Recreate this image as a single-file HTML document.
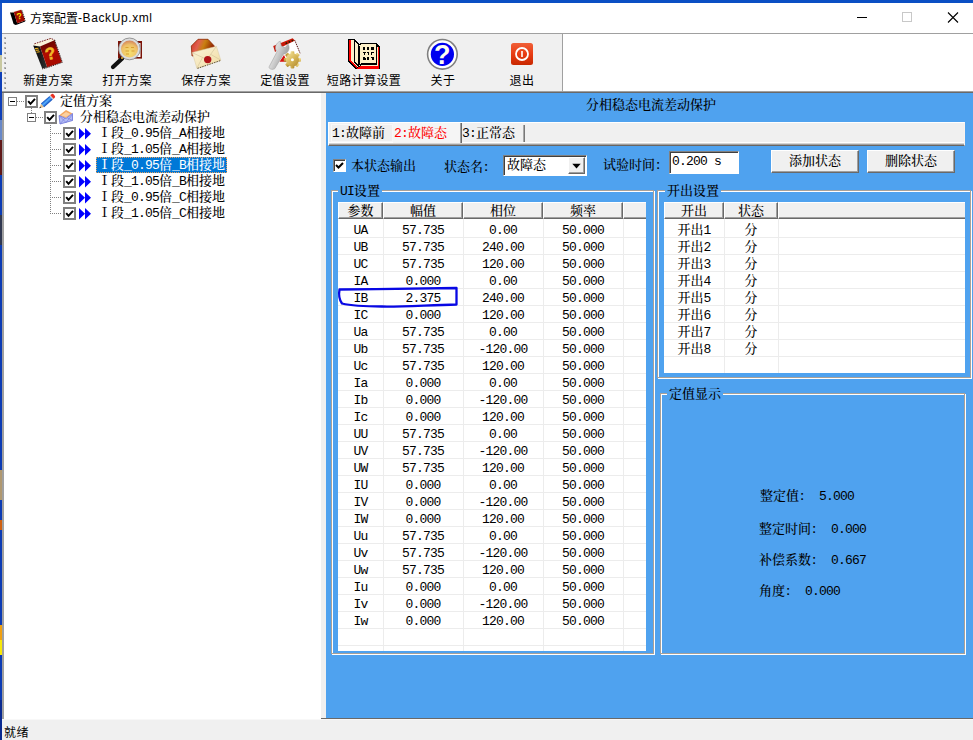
<!DOCTYPE html>
<html lang="zh-CN"><head><meta charset="utf-8"><title>方案配置-BackUp.xml</title>
<style>
html,body{margin:0;padding:0}
body{width:973px;height:740px;overflow:hidden;background:#fff;position:relative;color:#000;font:13px 'Liberation Mono','Noto Serif CJK SC',serif}
div,span,svg{box-sizing:border-box}
.a{position:absolute}
.t{position:absolute;white-space:pre;font:13px 'Liberation Mono','Noto Serif CJK SC',serif;line-height:16px;height:16px;font-weight:500;margin-top:1px}
.l{letter-spacing:-0.8px}
.ui{position:absolute;white-space:pre;font:12px 'Liberation Sans','Noto Sans CJK SC',sans-serif;line-height:16px;height:16px}
.c{text-align:center}
.hd{position:absolute;background:#f0f0f0;border-top:1px solid #fff;border-left:1px solid #fff;border-right:1px solid #696969;border-bottom:1px solid #696969;box-shadow:inset -1px -1px 0 #a0a0a0}
.hd.last{border-right:none;box-shadow:inset 0 -1px 0 #a0a0a0}
.gl{position:absolute;background:#ececec}
.cb{position:absolute;width:13px;height:13px;border:2px solid #808080;background:#fff}
.btn{position:absolute;background:#f0f0f0;border-top:1px solid #fff;border-left:1px solid #fff;border-right:1px solid #696969;border-bottom:1px solid #696969;box-shadow:inset -1px -1px 0 #a0a0a0}
.grp{position:absolute;border:1px solid #fff;box-shadow:inset 1px 1px 0 #a0a0a0, -1px -1px 0 #a0a0a0}
</style></head><body>

<div class="a" style="left:0;top:0;width:973px;height:3px;background:#0b4fc4"></div>
<div class="a" style="left:0;top:0;width:2px;height:740px;background:linear-gradient(#0b4fc4 0 3px,#1a54c8 3px 55px,#c8c8a0 55px 72px,#1040b8 72px 120px,#6888c8 120px 140px,#601818 140px 175px,#0c3cb4 175px 215px,#303850 215px 245px,#0c3cb4 245px 470px,#b09870 470px 500px,#0c3cb4 500px 520px,#d06010 520px 530px,#0c3cb4 530px 625px,#f0a010 625px 640px,#f8e808 640px 655px,#0c3cb4 655px 700px,#0a2a90 700px)"></div>
<div class="a" style="left:2px;top:3px;width:971px;height:30px;background:#fff"></div>
<div class="ui" style="left:30px;top:11px;">方案配置<span style="letter-spacing:0.6px;position:relative;top:-1px">-BackUp.xml</span></div>
<svg class="a" style="left:840px;top:3px" width="133" height="30" viewBox="0 0 133 30"><path d="M17 14.5h10" stroke="#000" stroke-width="1"/><rect x="62.5" y="9.5" width="9" height="9" fill="none" stroke="#c8c8c8"/><path d="M108 9.5l10 10M118 9.5l-10 10" stroke="#000" stroke-width="1.1"/></svg>
<div class="a" style="left:2px;top:33px;width:971px;height:1px;background:#a0a0a0"></div>
<div class="a" style="left:2px;top:34px;width:560px;height:57px;background:#f0f0f0"></div>
<div class="a" style="left:562px;top:34px;width:1px;height:57px;background:#a0a0a0"></div>
<div class="a" style="left:2px;top:91px;width:971px;height:1px;background:#a0a0a0"></div>
<div class="a" style="left:2px;top:92px;width:971px;height:1px;background:#696969"></div>
<svg class="a" style="left:4px;top:37px" width="3" height="54"><rect x="0" y="0" width="2" height="2" fill="#b4b4b4"/><rect x="1" y="1" width="1" height="1" fill="#8c8c8c"/><rect x="0" y="5" width="2" height="2" fill="#b4b4b4"/><rect x="1" y="6" width="1" height="1" fill="#8c8c8c"/><rect x="0" y="10" width="2" height="2" fill="#b4b4b4"/><rect x="1" y="11" width="1" height="1" fill="#8c8c8c"/><rect x="0" y="15" width="2" height="2" fill="#b4b4b4"/><rect x="1" y="16" width="1" height="1" fill="#8c8c8c"/><rect x="0" y="20" width="2" height="2" fill="#b4b4b4"/><rect x="1" y="21" width="1" height="1" fill="#8c8c8c"/><rect x="0" y="25" width="2" height="2" fill="#b4b4b4"/><rect x="1" y="26" width="1" height="1" fill="#8c8c8c"/><rect x="0" y="30" width="2" height="2" fill="#b4b4b4"/><rect x="1" y="31" width="1" height="1" fill="#8c8c8c"/><rect x="0" y="35" width="2" height="2" fill="#b4b4b4"/><rect x="1" y="36" width="1" height="1" fill="#8c8c8c"/><rect x="0" y="40" width="2" height="2" fill="#b4b4b4"/><rect x="1" y="41" width="1" height="1" fill="#8c8c8c"/><rect x="0" y="45" width="2" height="2" fill="#b4b4b4"/><rect x="1" y="46" width="1" height="1" fill="#8c8c8c"/><rect x="0" y="50" width="2" height="2" fill="#b4b4b4"/><rect x="1" y="51" width="1" height="1" fill="#8c8c8c"/></svg>
<div class="ui c" style="left:-2px;top:73px;width:100px;letter-spacing:0.4px">新建方案</div>
<div class="ui c" style="left:77px;top:73px;width:100px;letter-spacing:0.4px">打开方案</div>
<div class="ui c" style="left:156px;top:73px;width:100px;letter-spacing:0.4px">保存方案</div>
<div class="ui c" style="left:235px;top:73px;width:100px;letter-spacing:0.4px">定值设置</div>
<div class="ui c" style="left:314px;top:73px;width:100px;letter-spacing:0.4px">短路计算设置</div>
<div class="ui c" style="left:393px;top:73px;width:100px;letter-spacing:0.4px">关于</div>
<div class="ui c" style="left:472px;top:73px;width:100px;letter-spacing:0.4px">退出</div>
<svg class="a" style="left:6px;top:5px" width="30" height="24" viewBox="6 5 30 24"><path d="M10 12.6L13.8 12.1L17.2 23.2L25 20.6L25.2 21.6L17.4 24.6L15.6 25L13.6 24Z" fill="#000"/><path d="M10.2 12.2L20.8 9.3L21.4 10L13.8 12.4Z" fill="#f8f0e0"/><path d="M13.8 12.1L21.3 9.8L25 20.6L17.2 23.3Z" fill="#a00a00"/><path d="M22 10.5L25.2 20.5" stroke="#000" stroke-width="1" stroke-dasharray="1 1"/><text x="19.3" y="19.3" font-family="Liberation Sans, sans-serif" font-weight="bold" font-size="9" fill="#f8e800" text-anchor="middle" transform="rotate(-12 19.3 16)">?</text></svg>
<svg class="a" style="left:24px;top:34px" width="50" height="38" viewBox="24 34 50 38"><defs><linearGradient id="bk1" x1="0" y1="0" x2="0.3" y2="1"><stop offset="0" stop-color="#5a0400"/><stop offset="0.45" stop-color="#8a0800"/><stop offset="0.5" stop-color="#b00c00"/><stop offset="1" stop-color="#a80a00"/></linearGradient><linearGradient id="bk2" x1="0" y1="0" x2="1" y2="0"><stop offset="0" stop-color="#050505"/><stop offset="1" stop-color="#303030"/></linearGradient></defs><path d="M33.2 45.6L34.4 44.2L50.8 38.8L54.4 40.2L40.2 46.6Z" fill="#fbf3d8"/><path d="M33.2 45.6L40 46.4L47.2 67.3L42.2 68.6Z" fill="url(#bk2)"/><path d="M40 46.4L54.4 40.2L62 62.2L47.2 67.3Z" fill="url(#bk1)"/><path d="M34.4 43.8L50.8 38.4L54.6 40" stroke="#6a0808" stroke-width="0.9" fill="none" stroke-dasharray="1.6 1"/><path d="M54.6 40L62.3 62.3L47.3 67.6L42.2 68.9" stroke="#1a0000" stroke-width="0.9" fill="none" stroke-dasharray="1.4 0.9"/><path d="M35 48.6l3.4-.4M35.6 50.4l3.4-.4M36.4 52.2l3.4-.4" stroke="#e8b020" stroke-width="1.1"/><text x="50.6" y="59.4" font-family="Liberation Sans, sans-serif" font-weight="bold" font-size="17" fill="#f0b828" stroke="#f0b828" stroke-width="0.5" text-anchor="middle" transform="rotate(-14 50.6 54)">?</text></svg>
<svg class="a" style="left:103px;top:34px" width="50" height="38" viewBox="103 34 50 38"><defs><radialGradient id="ln" cx="0.5" cy="0.7" r="0.7"><stop offset="0" stop-color="#f6e070"/><stop offset="0.6" stop-color="#eec068"/><stop offset="1" stop-color="#c87058"/></radialGradient></defs><rect x="118" y="41" width="24" height="17.6" fill="#7a1408"/><rect x="134" y="43" width="6.5" height="14" fill="#fff"/><path d="M122.4 58.2L113 67" stroke="#101010" stroke-width="4.2" stroke-linecap="round"/><circle cx="129.5" cy="48.9" r="9.7" fill="url(#ln)" stroke="#dcdcdc" stroke-width="2.4"/><circle cx="129.5" cy="48.9" r="10.9" fill="none" stroke="#808080" stroke-width="0.8"/><path d="M125.5 47.5h3M131 47.5h3M125.5 51h3.5M131.5 51h3M126 54h3" stroke="#d8a030" stroke-width="1.2"/><circle cx="122" cy="58" r="1" fill="#f0b030"/></svg>
<svg class="a" style="left:182px;top:34px" width="50" height="38" viewBox="182 34 50 38"><defs><linearGradient id="ev1" x1="0" y1="0" x2="1" y2="0.3"><stop offset="0" stop-color="#d03020"/><stop offset="0.35" stop-color="#e06050"/><stop offset="0.6" stop-color="#c88010"/><stop offset="1" stop-color="#902000"/></linearGradient><linearGradient id="ev2" x1="0" y1="0" x2="1" y2="1"><stop offset="0" stop-color="#fbf4dc"/><stop offset="1" stop-color="#f0dca0"/></linearGradient></defs><path d="M191.3 46L198 39.3H208L214.3 46V52L192 56Z" fill="url(#ev1)" stroke="#8a2800" stroke-width="0.8"/><path d="M192.3 52.5L216.4 46.3L220.8 60.2L196.9 68.4Z" fill="url(#ev2)" stroke="#d8c8a0" stroke-width="0.5"/><path d="M192.5 52.8L207 59.5L216.2 46.6M197 68L202.5 57.5M220.5 60L211 54.5" stroke="#c8b890" stroke-width="0.5" fill="none"/><path d="M197.5 68.4L221 60.4" stroke="#504020" stroke-width="0.9" stroke-dasharray="1.5 1"/><circle cx="207.7" cy="59.6" r="3.7" fill="#b01418"/></svg>
<svg class="a" style="left:261px;top:34px" width="50" height="38" viewBox="261 34 50 38"><defs><linearGradient id="wr" x1="0" y1="0" x2="1" y2="0.6"><stop offset="0" stop-color="#ffffff"/><stop offset="0.5" stop-color="#d0d0d0"/><stop offset="1" stop-color="#909090"/></linearGradient><linearGradient id="gr" x1="0" y1="0" x2="1" y2="1"><stop offset="0" stop-color="#f4e4a0"/><stop offset="0.5" stop-color="#d8b858"/><stop offset="1" stop-color="#b08830"/></linearGradient></defs><path d="M273.2 46L292.6 38.2L295 40.4L300.2 53.6L286 61.5L280 61.5Z" fill="#fff"/><path d="M273.2 46L292.6 38.2L295 40.6L281 47.5L275 52Z" fill="#c81808"/><path d="M279.5 61.8L284 55L287 61.8Z" fill="#d81010"/><path d="M294.8 40.4L300.2 53.6" stroke="#500808" stroke-width="1" stroke-dasharray="1.2 0.8"/><circle cx="286.4" cy="43.2" r="0.9" fill="#282000"/><circle cx="289.4" cy="41.9" r="0.9" fill="#282000"/><circle cx="292.4" cy="40.6" r="0.9" fill="#282000"/><path d="M269.2 66.6L277 51.8C274 48.4 275.6 43 280.2 41.2L281.4 46L285.2 47.6L288 44C290.6 48 288.4 53.6 283.4 54.2L274.8 68.6C272.6 70.4 268.2 68.8 269.2 66.6Z" fill="url(#wr)" stroke="#989898" stroke-width="0.5"/><g transform="translate(292.4 59.8)"><g fill="url(#gr)"><rect x="-1.9" y="-8.6" width="3.8" height="17.2" rx="0.8" transform="rotate(0)"/><rect x="-1.9" y="-8.6" width="3.8" height="17.2" rx="0.8" transform="rotate(45)"/><rect x="-1.9" y="-8.6" width="3.8" height="17.2" rx="0.8" transform="rotate(90)"/><rect x="-1.9" y="-8.6" width="3.8" height="17.2" rx="0.8" transform="rotate(135)"/><circle r="6.6"/></g><circle r="1.5" fill="#fff"/></g></svg>
<svg class="a" style="left:340px;top:34px" width="50" height="38" viewBox="340 34 50 38" shape-rendering="crispEdges"><path d="M348 39H355L359 44V67L356 69.5L348 61Z" fill="#000"/><path d="M359 44L361 43H376L380 46V69H356L359 67Z" fill="#000"/><path d="M349 40H350.5V60.5L356.5 66.5V68.5L349 61Z" fill="#f00"/><path d="M357 68L361 66H378V47H379V68.5H357Z" fill="#f00"/><path d="M351 40H354V62.5L358 66V67L351 61Z" fill="#fdf0c8"/><path d="M355 41L358 45V65L355 62Z" fill="#fdf0c8"/><path d="M359.5 45.5L361.5 44H375.5V63H361.5L359.5 65.5Z" fill="#fdf0c8"/><path d="M359.5 67L362 64.5H376.5V46.5H377.5V66H360Z" fill="#fdf0c8"/><path d="M363 47.5h2M366.5 47.5h2.5M371 47.5h2.5M363 49h2M367 49h2M371 49h2.5M363 52.5h2.5M367 52.5h2M371 52.5h3M363.5 54h1.5M367.5 54h1.5M371 54h1M363 57.5h2M367 57.5h2M371 57.5h3M363 59h2.5M367 59h2M372 59h2" stroke="#000" stroke-width="1.4"/></svg>
<svg class="a" style="left:418px;top:34px" width="50" height="38" viewBox="418 34 50 38"><circle cx="442.4" cy="54.3" r="14.8" fill="#fff" stroke="#808080" stroke-width="1.6"/><circle cx="442.4" cy="54.3" r="11.6" fill="#0000f0"/><text x="442.3" y="64.2" font-family="Liberation Sans, sans-serif" font-weight="bold" font-size="27" fill="#fffff0" text-anchor="middle">?</text></svg>
<svg class="a" style="left:497px;top:34px" width="50" height="38" viewBox="497 34 50 38"><defs><linearGradient id="ex" x1="0" y1="0" x2="0" y2="1"><stop offset="0" stop-color="#f06038"/><stop offset="0.5" stop-color="#e83c14"/><stop offset="1" stop-color="#c82800"/></linearGradient></defs><rect x="511" y="43" width="22" height="22" rx="2.5" fill="url(#ex)"/><circle cx="522" cy="54" r="6" fill="none" stroke="#fff" stroke-width="1.8"/><path d="M522 51v6" stroke="#fff" stroke-width="1.6"/></svg>
<div class="a" style="left:2px;top:93px;width:2px;height:626px;background:#a0a0a0"></div>
<div class="a" style="left:321px;top:93px;width:5px;height:625px;background:#f0f0f0"></div>
<svg class="a" style="left:8px;top:97px" width="9" height="9"><rect x="0.5" y="0.5" width="8" height="8" fill="#fff" stroke="#808080"/><path d="M2 4.5h5" stroke="#000"/></svg>
<div class="a" style="left:17px;top:101px;width:7px;height:1px;background:repeating-linear-gradient(90deg,#808080 0 1px,transparent 1px 2px)"></div>
<div class="cb" style="left:25px;top:95px"></div>
<svg class="a" style="left:25px;top:95px" width="13" height="13"><path d="M3.2 6.2l2.3 2.6L10 3.8" stroke="#000" stroke-width="2" fill="none"/></svg>
<svg class="a" style="left:38px;top:92px" width="18" height="18" viewBox="-1 -1 18 18"><defs><linearGradient id="pc" x1="0" y1="0" x2="0" y2="1"><stop offset="0" stop-color="#0c4cc0"/><stop offset="0.45" stop-color="#58b0ff"/><stop offset="1" stop-color="#0c48b8"/></linearGradient></defs><g transform="translate(0.4 15.2) rotate(-41.7)"><path d="M0 0L4.4 -2.3V2.3Z" fill="#e8c088"/><path d="M0 0L1.7 -0.9V0.9Z" fill="#203040"/><rect x="4.2" y="-2.4" width="11.6" height="4.8" fill="url(#pc)"/><rect x="15.6" y="-2.4" width="1.2" height="4.8" fill="#c8ccd8"/><path d="M16.8 -2.4H18.4Q19.8 -2.4 19.8 0Q19.8 2.4 18.4 2.4H16.8Z" fill="#e83020"/></g></svg>
<div class="t" style="left:60px;top:93px">定值方案</div>
<div class="a" style="left:31px;top:108px;width:1px;height:5px;background:repeating-linear-gradient(180deg,#808080 0 1px,transparent 1px 2px)"></div>
<svg class="a" style="left:27px;top:113px" width="9" height="9"><rect x="0.5" y="0.5" width="8" height="8" fill="#fff" stroke="#808080"/><path d="M2 4.5h5" stroke="#000"/></svg>
<div class="a" style="left:36px;top:117px;width:7px;height:1px;background:repeating-linear-gradient(90deg,#808080 0 1px,transparent 1px 2px)"></div>
<div class="cb" style="left:44px;top:111px"></div>
<svg class="a" style="left:44px;top:111px" width="13" height="13"><path d="M3.2 6.2l2.3 2.6L10 3.8" stroke="#000" stroke-width="2" fill="none"/></svg>
<svg class="a" style="left:58px;top:109px" width="16" height="16" viewBox="0 0 16 16"><path d="M1 6.5L8 1l6.5 3.5L8 9z" fill="#f4a860"/><path d="M3 6.5L8 3l4.5 2L8 8z" fill="#fbd0a0"/><path d="M1 6.5l7 3 6.5-5v7L2 15z" fill="#b4bcf4" stroke="#6870d8" stroke-width=".8"/><path d="M1.5 7l6.5 6.5 6.5-8M2 15l5-6M14.5 11.5L9.5 9" stroke="#7880e0" stroke-width=".7" fill="none"/></svg>
<div class="t" style="left:80px;top:109px">分相稳态电流差动保护</div>
<div class="a" style="left:50px;top:125px;width:1px;height:89px;background:repeating-linear-gradient(180deg,#808080 0 1px,transparent 1px 2px)"></div>
<div class="a" style="left:52px;top:133px;width:10px;height:1px;background:repeating-linear-gradient(90deg,#808080 0 1px,transparent 1px 2px)"></div>
<div class="cb" style="left:63px;top:127px"></div>
<svg class="a" style="left:63px;top:127px" width="13" height="13"><path d="M3.2 6.2l2.3 2.6L10 3.8" stroke="#000" stroke-width="2" fill="none"/></svg>
<svg class="a" style="left:79px;top:128px" width="13" height="12"><path d="M0 0l6 5.75L0 11.5zM6 0l6 5.75L6 11.5z" fill="#00f"/></svg>
<div class="t" style="left:98px;top:125px">Ⅰ段<span class="l">_0.95</span>倍<span class="l">_A</span>相接地</div>
<div class="a" style="left:52px;top:149px;width:10px;height:1px;background:repeating-linear-gradient(90deg,#808080 0 1px,transparent 1px 2px)"></div>
<div class="cb" style="left:63px;top:143px"></div>
<svg class="a" style="left:63px;top:143px" width="13" height="13"><path d="M3.2 6.2l2.3 2.6L10 3.8" stroke="#000" stroke-width="2" fill="none"/></svg>
<svg class="a" style="left:79px;top:144px" width="13" height="12"><path d="M0 0l6 5.75L0 11.5zM6 0l6 5.75L6 11.5z" fill="#00f"/></svg>
<div class="t" style="left:98px;top:141px">Ⅰ段<span class="l">_1.05</span>倍<span class="l">_A</span>相接地</div>
<div class="a" style="left:52px;top:165px;width:10px;height:1px;background:repeating-linear-gradient(90deg,#808080 0 1px,transparent 1px 2px)"></div>
<div class="cb" style="left:63px;top:159px"></div>
<svg class="a" style="left:63px;top:159px" width="13" height="13"><path d="M3.2 6.2l2.3 2.6L10 3.8" stroke="#000" stroke-width="2" fill="none"/></svg>
<svg class="a" style="left:79px;top:160px" width="13" height="12"><path d="M0 0l6 5.75L0 11.5zM6 0l6 5.75L6 11.5z" fill="#00f"/></svg>
<div class="a" style="left:96px;top:157px;width:131px;height:16px;background:#0078d7;outline:1px dotted #e8a060;outline-offset:-1px"></div>
<div class="t" style="left:98px;top:157px;color:#fff">Ⅰ段<span class="l">_0.95</span>倍<span class="l">_B</span>相接地</div>
<div class="a" style="left:52px;top:181px;width:10px;height:1px;background:repeating-linear-gradient(90deg,#808080 0 1px,transparent 1px 2px)"></div>
<div class="cb" style="left:63px;top:175px"></div>
<svg class="a" style="left:63px;top:175px" width="13" height="13"><path d="M3.2 6.2l2.3 2.6L10 3.8" stroke="#000" stroke-width="2" fill="none"/></svg>
<svg class="a" style="left:79px;top:176px" width="13" height="12"><path d="M0 0l6 5.75L0 11.5zM6 0l6 5.75L6 11.5z" fill="#00f"/></svg>
<div class="t" style="left:98px;top:173px">Ⅰ段<span class="l">_1.05</span>倍<span class="l">_B</span>相接地</div>
<div class="a" style="left:52px;top:197px;width:10px;height:1px;background:repeating-linear-gradient(90deg,#808080 0 1px,transparent 1px 2px)"></div>
<div class="cb" style="left:63px;top:191px"></div>
<svg class="a" style="left:63px;top:191px" width="13" height="13"><path d="M3.2 6.2l2.3 2.6L10 3.8" stroke="#000" stroke-width="2" fill="none"/></svg>
<svg class="a" style="left:79px;top:192px" width="13" height="12"><path d="M0 0l6 5.75L0 11.5zM6 0l6 5.75L6 11.5z" fill="#00f"/></svg>
<div class="t" style="left:98px;top:189px">Ⅰ段<span class="l">_0.95</span>倍<span class="l">_C</span>相接地</div>
<div class="a" style="left:52px;top:213px;width:10px;height:1px;background:repeating-linear-gradient(90deg,#808080 0 1px,transparent 1px 2px)"></div>
<div class="cb" style="left:63px;top:207px"></div>
<svg class="a" style="left:63px;top:207px" width="13" height="13"><path d="M3.2 6.2l2.3 2.6L10 3.8" stroke="#000" stroke-width="2" fill="none"/></svg>
<svg class="a" style="left:79px;top:208px" width="13" height="12"><path d="M0 0l6 5.75L0 11.5zM6 0l6 5.75L6 11.5z" fill="#00f"/></svg>
<div class="t" style="left:98px;top:205px">Ⅰ段<span class="l">_1.05</span>倍<span class="l">_C</span>相接地</div>
<div class="a" style="left:326px;top:93px;width:647px;height:625px;background:#4fa2ef"></div>
<div class="t c" style="left:551px;top:97px;width:200px">分相稳态电流差动保护</div>
<div class="a" style="left:328px;top:122px;width:637px;height:24px;background:#f0f0f0;border-top:1px solid #fff;border-left:1px solid #fff;border-right:1px solid #f8f2ee;border-bottom:1px solid #6a6560;box-shadow:inset 0 -1px 0 #a0a0a0,inset 0 -2px 0 #d4d4d4,inset 0 -3px 0 #fff"></div>
<div class="a" style="left:331px;top:124px;width:62px;height:18px;background:#efefef;border:1px solid #f8f8f8"></div>
<div class="a" style="left:393px;top:123px;width:69px;height:20px;background:#f5f5f5;border-right:1px solid #696969;box-shadow:inset -1px 0 0 #a0a0a0"></div>
<div class="a" style="left:523px;top:125px;width:2px;height:17px;background:linear-gradient(90deg,#a8a8a8 50%,#787878 50%)"></div>
<div class="t" style="left:332px;top:125px"><span class="l">1:</span>故障前</div>
<div class="t" style="left:394px;top:125px;color:#f00"><span class="l">2:</span>故障态</div>
<div class="t" style="left:462px;top:125px"><span class="l">3:</span>正常态</div>
<div class="a" style="left:333px;top:159px;width:13px;height:13px;background:#fff;border-top:1px solid #808080;border-left:1px solid #808080;border-right:1px solid #fff;border-bottom:1px solid #fff;box-shadow:inset 1px 1px 0 #404040"></div>
<svg class="a" style="left:333px;top:159px" width="13" height="13"><path d="M3 6l2.5 2.5L10 4" stroke="#000" stroke-width="2" fill="none"/></svg>
<div class="t" style="left:351px;top:158px">本状态输出</div>
<div class="t" style="left:444px;top:159px">状态名：</div>
<div class="a" style="left:503px;top:155px;width:84px;height:21px;background:#fff;border-top:1px solid #808080;border-left:1px solid #808080;border-right:1px solid #fff;border-bottom:1px solid #fff;box-shadow:inset 1px 1px 0 #404040"></div>
<div class="btn" style="left:568px;top:157px;width:17px;height:17px"></div>
<svg class="a" style="left:568px;top:157px" width="17" height="17"><path d="M4.3 6.8h8.4l-4.2 4.6z" fill="#000"/></svg>
<div class="t" style="left:507px;top:157px">故障态</div>
<div class="t" style="left:603px;top:157px">试验时间：</div>
<div class="a" style="left:669px;top:151px;width:70px;height:23px;background:#fff;border-top:1px solid #808080;border-left:1px solid #808080;border-right:1px solid #fff;border-bottom:1px solid #fff;box-shadow:inset 1px 1px 0 #404040"></div>
<div class="t" style="left:672px;top:153px"><span class="l">0.200 s</span></div>
<div class="btn" style="left:771px;top:150px;width:88px;height:23px"></div>
<div class="t c" style="left:771px;top:153px;width:88px">添加状态</div>
<div class="btn" style="left:867px;top:150px;width:88px;height:23px"></div>
<div class="t c" style="left:867px;top:153px;width:88px">删除状态</div>
<div class="a" style="left:332px;top:191px;width:323px;height:464px;border:1px solid #fff"></div>
<div class="a" style="left:331px;top:190px;width:323px;height:464px;border:1px solid #a8a098"></div>
<div class="a" style="left:338px;top:190px;width:44px;height:2px;background:#4fa2ef"></div>
<div class="t" style="left:340px;top:183px"><span class="l">UI</span>设置</div>
<div class="a" style="left:658px;top:191px;width:314px;height:188px;border:1px solid #fff"></div>
<div class="a" style="left:657px;top:190px;width:314px;height:188px;border:1px solid #a8a098"></div>
<div class="a" style="left:665px;top:190px;width:56px;height:2px;background:#4fa2ef"></div>
<div class="t" style="left:667px;top:183px">开出设置</div>
<div class="a" style="left:661px;top:394px;width:305px;height:261px;border:1px solid #fff"></div>
<div class="a" style="left:660px;top:393px;width:305px;height:261px;border:1px solid #a8a098"></div>
<div class="a" style="left:667px;top:393px;width:56px;height:2px;background:#4fa2ef"></div>
<div class="t" style="left:669px;top:386px">定值显示</div>
<div class="a" style="left:338px;top:202px;width:308px;height:449px;background:#fff"></div>
<div class="hd" style="left:338px;top:202px;width:45px;height:17px"></div>
<div class="t c" style="left:338px;top:203px;width:45px">参数</div>
<div class="hd" style="left:383px;top:202px;width:80px;height:17px"></div>
<div class="t c" style="left:383px;top:203px;width:80px">幅值</div>
<div class="hd" style="left:463px;top:202px;width:80px;height:17px"></div>
<div class="t c" style="left:463px;top:203px;width:80px">相位</div>
<div class="hd" style="left:543px;top:202px;width:80px;height:17px"></div>
<div class="t c" style="left:543px;top:203px;width:80px">频率</div>
<div class="hd last" style="left:623px;top:202px;width:23px;height:17px"></div>
<div class="gl" style="left:338px;top:237px;width:308px;height:1px"></div>
<div class="gl" style="left:338px;top:254px;width:308px;height:1px"></div>
<div class="gl" style="left:338px;top:271px;width:308px;height:1px"></div>
<div class="gl" style="left:338px;top:288px;width:308px;height:1px"></div>
<div class="gl" style="left:338px;top:305px;width:308px;height:1px"></div>
<div class="gl" style="left:338px;top:322px;width:308px;height:1px"></div>
<div class="gl" style="left:338px;top:339px;width:308px;height:1px"></div>
<div class="gl" style="left:338px;top:356px;width:308px;height:1px"></div>
<div class="gl" style="left:338px;top:373px;width:308px;height:1px"></div>
<div class="gl" style="left:338px;top:390px;width:308px;height:1px"></div>
<div class="gl" style="left:338px;top:407px;width:308px;height:1px"></div>
<div class="gl" style="left:338px;top:424px;width:308px;height:1px"></div>
<div class="gl" style="left:338px;top:441px;width:308px;height:1px"></div>
<div class="gl" style="left:338px;top:458px;width:308px;height:1px"></div>
<div class="gl" style="left:338px;top:475px;width:308px;height:1px"></div>
<div class="gl" style="left:338px;top:492px;width:308px;height:1px"></div>
<div class="gl" style="left:338px;top:509px;width:308px;height:1px"></div>
<div class="gl" style="left:338px;top:526px;width:308px;height:1px"></div>
<div class="gl" style="left:338px;top:543px;width:308px;height:1px"></div>
<div class="gl" style="left:338px;top:560px;width:308px;height:1px"></div>
<div class="gl" style="left:338px;top:577px;width:308px;height:1px"></div>
<div class="gl" style="left:338px;top:594px;width:308px;height:1px"></div>
<div class="gl" style="left:338px;top:611px;width:308px;height:1px"></div>
<div class="gl" style="left:338px;top:628px;width:308px;height:1px"></div>
<div class="gl" style="left:338px;top:645px;width:308px;height:1px"></div>
<div class="gl" style="left:383px;top:219px;width:1px;height:432px"></div>
<div class="gl" style="left:463px;top:219px;width:1px;height:432px"></div>
<div class="gl" style="left:543px;top:219px;width:1px;height:432px"></div>
<div class="gl" style="left:623px;top:219px;width:1px;height:432px"></div>
<div class="t c l" style="left:338px;top:222px;width:45px">UA</div>
<div class="t c l" style="left:383px;top:222px;width:80px">57.735</div>
<div class="t c l" style="left:463px;top:222px;width:80px">0.00</div>
<div class="t c l" style="left:543px;top:222px;width:80px">50.000</div>
<div class="t c l" style="left:338px;top:239px;width:45px">UB</div>
<div class="t c l" style="left:383px;top:239px;width:80px">57.735</div>
<div class="t c l" style="left:463px;top:239px;width:80px">240.00</div>
<div class="t c l" style="left:543px;top:239px;width:80px">50.000</div>
<div class="t c l" style="left:338px;top:256px;width:45px">UC</div>
<div class="t c l" style="left:383px;top:256px;width:80px">57.735</div>
<div class="t c l" style="left:463px;top:256px;width:80px">120.00</div>
<div class="t c l" style="left:543px;top:256px;width:80px">50.000</div>
<div class="t c l" style="left:338px;top:273px;width:45px">IA</div>
<div class="t c l" style="left:383px;top:273px;width:80px">0.000</div>
<div class="t c l" style="left:463px;top:273px;width:80px">0.00</div>
<div class="t c l" style="left:543px;top:273px;width:80px">50.000</div>
<div class="t c l" style="left:338px;top:290px;width:45px">IB</div>
<div class="t c l" style="left:383px;top:290px;width:80px">2.375</div>
<div class="t c l" style="left:463px;top:290px;width:80px">240.00</div>
<div class="t c l" style="left:543px;top:290px;width:80px">50.000</div>
<div class="t c l" style="left:338px;top:307px;width:45px">IC</div>
<div class="t c l" style="left:383px;top:307px;width:80px">0.000</div>
<div class="t c l" style="left:463px;top:307px;width:80px">120.00</div>
<div class="t c l" style="left:543px;top:307px;width:80px">50.000</div>
<div class="t c l" style="left:338px;top:324px;width:45px">Ua</div>
<div class="t c l" style="left:383px;top:324px;width:80px">57.735</div>
<div class="t c l" style="left:463px;top:324px;width:80px">0.00</div>
<div class="t c l" style="left:543px;top:324px;width:80px">50.000</div>
<div class="t c l" style="left:338px;top:341px;width:45px">Ub</div>
<div class="t c l" style="left:383px;top:341px;width:80px">57.735</div>
<div class="t c l" style="left:463px;top:341px;width:80px">-120.00</div>
<div class="t c l" style="left:543px;top:341px;width:80px">50.000</div>
<div class="t c l" style="left:338px;top:358px;width:45px">Uc</div>
<div class="t c l" style="left:383px;top:358px;width:80px">57.735</div>
<div class="t c l" style="left:463px;top:358px;width:80px">120.00</div>
<div class="t c l" style="left:543px;top:358px;width:80px">50.000</div>
<div class="t c l" style="left:338px;top:375px;width:45px">Ia</div>
<div class="t c l" style="left:383px;top:375px;width:80px">0.000</div>
<div class="t c l" style="left:463px;top:375px;width:80px">0.00</div>
<div class="t c l" style="left:543px;top:375px;width:80px">50.000</div>
<div class="t c l" style="left:338px;top:392px;width:45px">Ib</div>
<div class="t c l" style="left:383px;top:392px;width:80px">0.000</div>
<div class="t c l" style="left:463px;top:392px;width:80px">-120.00</div>
<div class="t c l" style="left:543px;top:392px;width:80px">50.000</div>
<div class="t c l" style="left:338px;top:409px;width:45px">Ic</div>
<div class="t c l" style="left:383px;top:409px;width:80px">0.000</div>
<div class="t c l" style="left:463px;top:409px;width:80px">120.00</div>
<div class="t c l" style="left:543px;top:409px;width:80px">50.000</div>
<div class="t c l" style="left:338px;top:426px;width:45px">UU</div>
<div class="t c l" style="left:383px;top:426px;width:80px">57.735</div>
<div class="t c l" style="left:463px;top:426px;width:80px">0.00</div>
<div class="t c l" style="left:543px;top:426px;width:80px">50.000</div>
<div class="t c l" style="left:338px;top:443px;width:45px">UV</div>
<div class="t c l" style="left:383px;top:443px;width:80px">57.735</div>
<div class="t c l" style="left:463px;top:443px;width:80px">-120.00</div>
<div class="t c l" style="left:543px;top:443px;width:80px">50.000</div>
<div class="t c l" style="left:338px;top:460px;width:45px">UW</div>
<div class="t c l" style="left:383px;top:460px;width:80px">57.735</div>
<div class="t c l" style="left:463px;top:460px;width:80px">120.00</div>
<div class="t c l" style="left:543px;top:460px;width:80px">50.000</div>
<div class="t c l" style="left:338px;top:477px;width:45px">IU</div>
<div class="t c l" style="left:383px;top:477px;width:80px">0.000</div>
<div class="t c l" style="left:463px;top:477px;width:80px">0.00</div>
<div class="t c l" style="left:543px;top:477px;width:80px">50.000</div>
<div class="t c l" style="left:338px;top:494px;width:45px">IV</div>
<div class="t c l" style="left:383px;top:494px;width:80px">0.000</div>
<div class="t c l" style="left:463px;top:494px;width:80px">-120.00</div>
<div class="t c l" style="left:543px;top:494px;width:80px">50.000</div>
<div class="t c l" style="left:338px;top:511px;width:45px">IW</div>
<div class="t c l" style="left:383px;top:511px;width:80px">0.000</div>
<div class="t c l" style="left:463px;top:511px;width:80px">120.00</div>
<div class="t c l" style="left:543px;top:511px;width:80px">50.000</div>
<div class="t c l" style="left:338px;top:528px;width:45px">Uu</div>
<div class="t c l" style="left:383px;top:528px;width:80px">57.735</div>
<div class="t c l" style="left:463px;top:528px;width:80px">0.00</div>
<div class="t c l" style="left:543px;top:528px;width:80px">50.000</div>
<div class="t c l" style="left:338px;top:545px;width:45px">Uv</div>
<div class="t c l" style="left:383px;top:545px;width:80px">57.735</div>
<div class="t c l" style="left:463px;top:545px;width:80px">-120.00</div>
<div class="t c l" style="left:543px;top:545px;width:80px">50.000</div>
<div class="t c l" style="left:338px;top:562px;width:45px">Uw</div>
<div class="t c l" style="left:383px;top:562px;width:80px">57.735</div>
<div class="t c l" style="left:463px;top:562px;width:80px">120.00</div>
<div class="t c l" style="left:543px;top:562px;width:80px">50.000</div>
<div class="t c l" style="left:338px;top:579px;width:45px">Iu</div>
<div class="t c l" style="left:383px;top:579px;width:80px">0.000</div>
<div class="t c l" style="left:463px;top:579px;width:80px">0.00</div>
<div class="t c l" style="left:543px;top:579px;width:80px">50.000</div>
<div class="t c l" style="left:338px;top:596px;width:45px">Iv</div>
<div class="t c l" style="left:383px;top:596px;width:80px">0.000</div>
<div class="t c l" style="left:463px;top:596px;width:80px">-120.00</div>
<div class="t c l" style="left:543px;top:596px;width:80px">50.000</div>
<div class="t c l" style="left:338px;top:613px;width:45px">Iw</div>
<div class="t c l" style="left:383px;top:613px;width:80px">0.000</div>
<div class="t c l" style="left:463px;top:613px;width:80px">120.00</div>
<div class="t c l" style="left:543px;top:613px;width:80px">50.000</div>
<svg class="a" style="left:330px;top:280px" width="140" height="35" viewBox="330 280 140 35"><path d="M339.5 289.5 C380 289 430 288.5 456.5 288 L456.5 304.5 C430 305 400 307 382 306.5 C365 306.5 350 305.5 342 303.5 C339.5 300 338.5 295 339.5 289.5Z" fill="none" stroke="#0808e4" stroke-width="2.3" stroke-linejoin="round"/></svg>
<div class="a" style="left:664px;top:202px;width:301px;height:171px;background:#fff"></div>
<div class="hd" style="left:664px;top:202px;width:60px;height:17px"></div>
<div class="t c" style="left:664px;top:203px;width:60px">开出</div>
<div class="hd" style="left:724px;top:202px;width:54px;height:17px"></div>
<div class="t c" style="left:724px;top:203px;width:54px">状态</div>
<div class="hd last" style="left:778px;top:202px;width:187px;height:17px"></div>
<div class="gl" style="left:664px;top:237px;width:301px;height:1px"></div>
<div class="gl" style="left:664px;top:254px;width:301px;height:1px"></div>
<div class="gl" style="left:664px;top:271px;width:301px;height:1px"></div>
<div class="gl" style="left:664px;top:288px;width:301px;height:1px"></div>
<div class="gl" style="left:664px;top:305px;width:301px;height:1px"></div>
<div class="gl" style="left:664px;top:322px;width:301px;height:1px"></div>
<div class="gl" style="left:664px;top:339px;width:301px;height:1px"></div>
<div class="gl" style="left:664px;top:356px;width:301px;height:1px"></div>
<div class="gl" style="left:724px;top:219px;width:1px;height:154px"></div>
<div class="gl" style="left:778px;top:219px;width:1px;height:154px"></div>
<div class="t c" style="left:664px;top:222px;width:60px">开出<span class="l">1</span></div>
<div class="t c" style="left:724px;top:222px;width:54px">分</div>
<div class="t c" style="left:664px;top:239px;width:60px">开出<span class="l">2</span></div>
<div class="t c" style="left:724px;top:239px;width:54px">分</div>
<div class="t c" style="left:664px;top:256px;width:60px">开出<span class="l">3</span></div>
<div class="t c" style="left:724px;top:256px;width:54px">分</div>
<div class="t c" style="left:664px;top:273px;width:60px">开出<span class="l">4</span></div>
<div class="t c" style="left:724px;top:273px;width:54px">分</div>
<div class="t c" style="left:664px;top:290px;width:60px">开出<span class="l">5</span></div>
<div class="t c" style="left:724px;top:290px;width:54px">分</div>
<div class="t c" style="left:664px;top:307px;width:60px">开出<span class="l">6</span></div>
<div class="t c" style="left:724px;top:307px;width:54px">分</div>
<div class="t c" style="left:664px;top:324px;width:60px">开出<span class="l">7</span></div>
<div class="t c" style="left:724px;top:324px;width:54px">分</div>
<div class="t c" style="left:664px;top:341px;width:60px">开出<span class="l">8</span></div>
<div class="t c" style="left:724px;top:341px;width:54px">分</div>
<div class="t" style="left:760px;top:488px">整定值：<span class="l"> 5.000</span></div>
<div class="t" style="left:759px;top:521px">整定时间：<span class="l"> 0.000</span></div>
<div class="t" style="left:759px;top:552px">补偿系数：<span class="l"> 0.667</span></div>
<div class="t" style="left:759px;top:583px">角度：<span class="l"> 0.000</span></div>
<div class="a" style="left:321px;top:718px;width:652px;height:1px;background:#696969"></div>
<div class="a" style="left:2px;top:719px;width:971px;height:1px;background:#f8f8f8"></div>
<div class="a" style="left:2px;top:720px;width:971px;height:20px;background:#f0f0f0"></div>
<div class="ui" style="left:4px;top:725px;letter-spacing:0.4px">就绪</div>
</body></html>
